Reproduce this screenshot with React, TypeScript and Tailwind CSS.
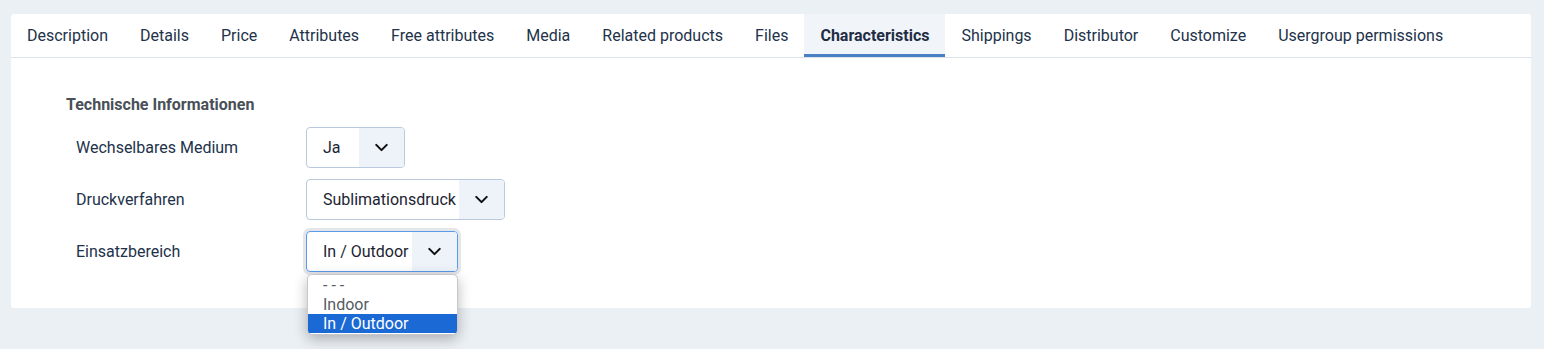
import { ChevronDown } from 'lucide-react';

const TABS = [
  'Description', 'Details', 'Price', 'Attributes', 'Free attributes', 'Media',
  'Related products', 'Files', 'Characteristics', 'Shippings', 'Distributor',
  'Customize', 'Usergroup permissions',
];
const ACTIVE_TAB = 'Characteristics';

type Field = { label: string; value: string; width: string; focused?: boolean };

const FIELDS: Field[] = [
  { label: 'Wechselbares Medium', value: 'Ja', width: 'w-[99px]' },
  { label: 'Druckverfahren', value: 'Sublimationsdruck', width: 'w-[199px]' },
  { label: 'Einsatzbereich', value: 'In / Outdoor', width: 'w-[152px]', focused: true },
];

const OPTIONS = ['- - -', 'Indoor', 'In / Outdoor'];

export default function App() {
  return (
    <div className="min-h-[349px] bg-[#ebf0f5] pl-[11px] pr-[13px] pt-[14px] font-['Roboto',sans-serif]">
      <div className="rounded-[3px] bg-white">
        {/* ── Tabs ── */}
        <div className="flex h-[44px] border-b border-[#dde3ea]">
          {TABS.map((t) => (
            <div
              key={t}
              className={
                t === ACTIVE_TAB
                  ? 'flex items-center border-b-[3px] border-[#4a7fc4] bg-[#f1f5f9] px-4 pt-[3px] text-[16px] font-bold text-[#1f2d44]'
                  : 'flex items-center border-b-[3px] border-transparent px-4 pt-[3px] text-[16px] text-[#22324a]'
              }
            >
              {t}
            </div>
          ))}
        </div>

        {/* ── Form ── */}
        <div className="h-[250px] px-[55px] pt-[36px]">
          <h3 className="text-[16px] font-bold leading-[22px] text-[#495057]">Technische Informationen</h3>
          <div className="mt-[11px] flex flex-col gap-[11px]">
            {FIELDS.map((f) => (
              <div key={f.label} className="flex items-center">
                <label className="w-[240px] shrink-0 pl-[10px] text-[16px] text-[#22324a]">{f.label}</label>
                <div className="relative">
                  <div
                    className={
                      'flex h-[41px] items-stretch overflow-hidden rounded-[4px] border ' +
                      (f.focused
                        ? 'border-[#5a9ae8] shadow-[0_0_0_3px_#e4e6ea]'
                        : 'border-[#b9c9de]') +
                      ' ' + f.width
                    }
                  >
                    <span className="flex min-w-0 flex-1 items-center overflow-hidden whitespace-nowrap pl-4 text-[16px] text-[#1c2433]">{f.value}</span>
                    <span className="flex w-[45px] shrink-0 items-center justify-center bg-[#eef3fa]">
                      <ChevronDown size={21} strokeWidth={2.4} className="text-[#111]" />
                    </span>
                  </div>
                  {f.focused && (
                    <div className="absolute left-px top-[43px] z-10 w-[151px] overflow-hidden rounded-[5px] border border-[#c8c8c8] bg-white py-px text-[16px] leading-[19px] shadow-[0_4px_14px_rgba(0,0,0,0.28)]">
                      {OPTIONS.map((o) => (
                        <div
                          key={o}
                          className={
                            o === f.value
                              ? 'bg-[#1a69d4] px-[15px] text-white'
                              : 'px-[15px] text-[#555b63]'
                          }
                        >
                          {o}
                        </div>
                      ))}
                    </div>
                  )}
                </div>
              </div>
            ))}
          </div>
        </div>
      </div>
    </div>
  );
}
